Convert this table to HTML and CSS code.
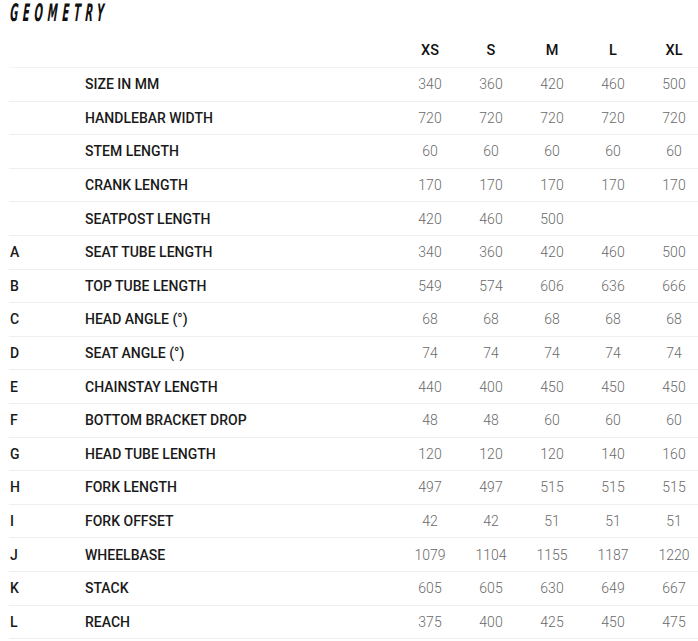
FILE: index.html
```html
<!DOCTYPE html>
<html lang="en">
<head>
<meta charset="utf-8">
<title>Geometry</title>
<link rel="stylesheet" href="styles.css">
</head>
<body>
<div class="page">
  <h2 class="title"><span class="title-text">GEOMETRY</span></h2>
  <div class="table">
    <div class="row head"><span class="key"></span><span class="label"></span><span class="val">XS</span><span class="val">S</span><span class="val">M</span><span class="val">L</span><span class="val">XL</span></div>
    <div class="row"><span class="key"></span><span class="label">SIZE IN MM</span><span class="val">340</span><span class="val">360</span><span class="val">420</span><span class="val">460</span><span class="val">500</span></div>
    <div class="row"><span class="key"></span><span class="label">HANDLEBAR WIDTH</span><span class="val">720</span><span class="val">720</span><span class="val">720</span><span class="val">720</span><span class="val">720</span></div>
    <div class="row"><span class="key"></span><span class="label">STEM LENGTH</span><span class="val">60</span><span class="val">60</span><span class="val">60</span><span class="val">60</span><span class="val">60</span></div>
    <div class="row"><span class="key"></span><span class="label">CRANK LENGTH</span><span class="val">170</span><span class="val">170</span><span class="val">170</span><span class="val">170</span><span class="val">170</span></div>
    <div class="row"><span class="key"></span><span class="label">SEATPOST LENGTH</span><span class="val">420</span><span class="val">460</span><span class="val">500</span><span class="val"></span><span class="val"></span></div>
    <div class="row"><span class="key">A</span><span class="label">SEAT TUBE LENGTH</span><span class="val">340</span><span class="val">360</span><span class="val">420</span><span class="val">460</span><span class="val">500</span></div>
    <div class="row"><span class="key">B</span><span class="label">TOP TUBE LENGTH</span><span class="val">549</span><span class="val">574</span><span class="val">606</span><span class="val">636</span><span class="val">666</span></div>
    <div class="row"><span class="key">C</span><span class="label">HEAD ANGLE (°)</span><span class="val">68</span><span class="val">68</span><span class="val">68</span><span class="val">68</span><span class="val">68</span></div>
    <div class="row"><span class="key">D</span><span class="label">SEAT ANGLE (°)</span><span class="val">74</span><span class="val">74</span><span class="val">74</span><span class="val">74</span><span class="val">74</span></div>
    <div class="row"><span class="key">E</span><span class="label">CHAINSTAY LENGTH</span><span class="val">440</span><span class="val">400</span><span class="val">450</span><span class="val">450</span><span class="val">450</span></div>
    <div class="row"><span class="key">F</span><span class="label">BOTTOM BRACKET DROP</span><span class="val">48</span><span class="val">48</span><span class="val">60</span><span class="val">60</span><span class="val">60</span></div>
    <div class="row"><span class="key">G</span><span class="label">HEAD TUBE LENGTH</span><span class="val">120</span><span class="val">120</span><span class="val">120</span><span class="val">140</span><span class="val">160</span></div>
    <div class="row"><span class="key">H</span><span class="label">FORK LENGTH</span><span class="val">497</span><span class="val">497</span><span class="val">515</span><span class="val">515</span><span class="val">515</span></div>
    <div class="row"><span class="key">I</span><span class="label">FORK OFFSET</span><span class="val">42</span><span class="val">42</span><span class="val">51</span><span class="val">51</span><span class="val">51</span></div>
    <div class="row"><span class="key">J</span><span class="label">WHEELBASE</span><span class="val">1079</span><span class="val">1104</span><span class="val">1155</span><span class="val">1187</span><span class="val">1220</span></div>
    <div class="row"><span class="key">K</span><span class="label">STACK</span><span class="val">605</span><span class="val">605</span><span class="val">630</span><span class="val">649</span><span class="val">667</span></div>
    <div class="row"><span class="key">L</span><span class="label">REACH</span><span class="val">375</span><span class="val">400</span><span class="val">425</span><span class="val">450</span><span class="val">475</span></div>
  </div>
</div>
</body>
</html>
```
FILE: styles.css
```css
html, body {
  margin: 0;
  padding: 0;
  overflow: hidden;
  background: #fff;
}
.page {
  width: 706px;
  padding: 1px 0 0 9px;
  font-family: Roboto, "Liberation Sans", sans-serif;
}
.title {
  margin: 0;
  height: 33px;
  font-family: "DejaVu Sans Condensed", "DejaVu Sans", sans-serif;
  font-weight: bold;
  font-style: italic;
  font-size: 22px;
  line-height: 22px;
  color: #111;
}
.title-text {
  display: inline-block;
  letter-spacing: 9.5px;
  transform-origin: left top;
  transform: translateX(2px) scale(0.5, 1.1) skewX(-8deg);
}
.row {
  display: grid;
  grid-template-columns: 76px 314.5px repeat(5, 61px);
  align-items: center;
  height: 33.6px;
  border-bottom: 1px solid #efefef;
  box-sizing: border-box;
}
.row.head {
  height: 34px;
  border-bottom-color: #f2f2f2;
}
.key, .label {
  font-size: 14px;
  font-weight: 500;
  color: #1a1a1a;
}
.key {
  padding-left: 1px;
}
.val {
  text-align: center;
  font-size: 14px;
  font-weight: 300;
  color: #6a6a6a;
}
.head .val {
  font-weight: 500;
  font-size: 14.5px;
  color: #111;
}
```
